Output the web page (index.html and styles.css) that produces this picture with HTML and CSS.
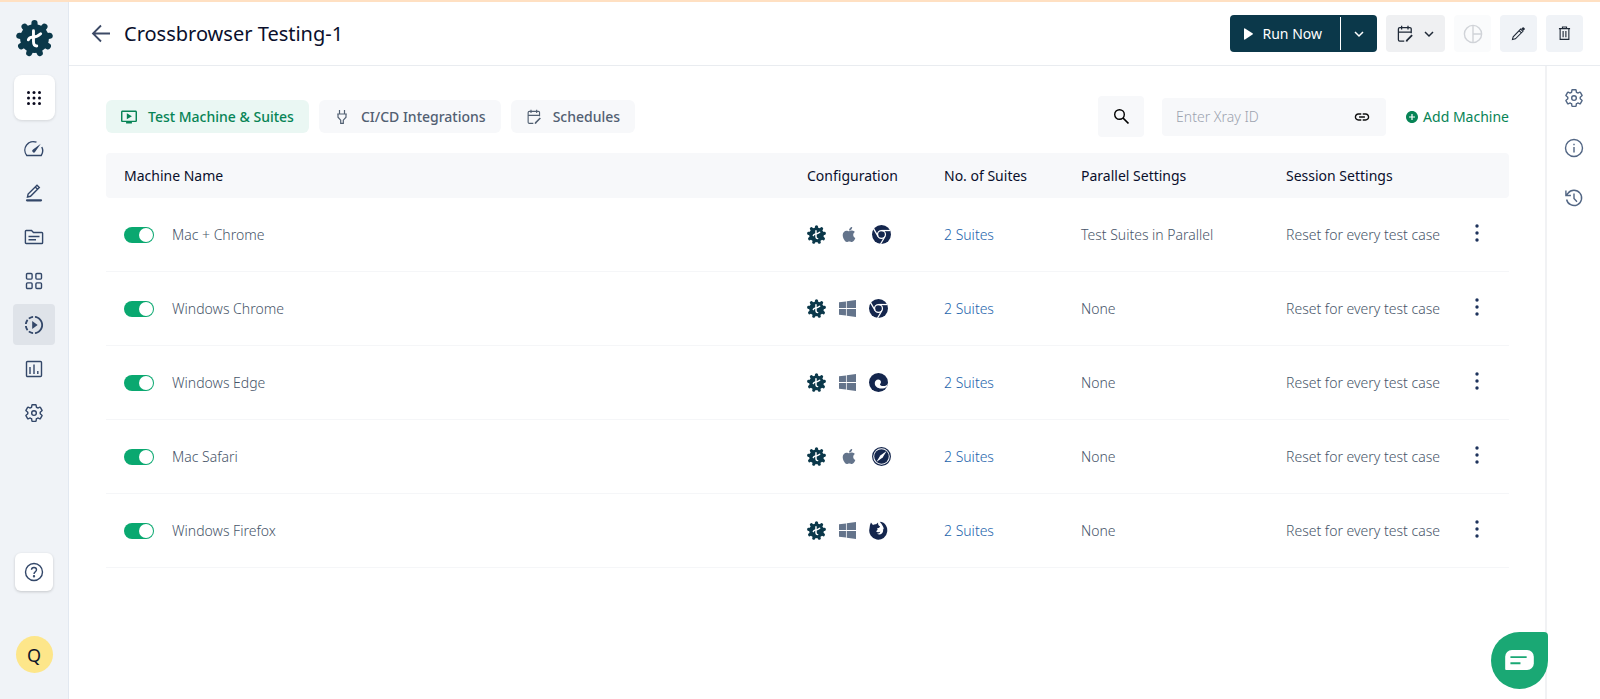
FILE: index.html
```html
<!DOCTYPE html>
<html lang="en">
<head>
<meta charset="utf-8">
<title>Crossbrowser Testing-1</title>
<link rel="stylesheet" href="styles.css">
</head>
<body>
<svg class="sprite" aria-hidden="true">
  <symbol id="brand" viewBox="0 0 36 36">
    <circle cx="18" cy="18.500" r="14"/>
    <g stroke="currentColor" stroke-width="6" stroke-linecap="round">
      <path d="M18 18.500V3.500"/>
      <path d="M18 18.500V3.500" transform="rotate(40 18 18.500)"/>
      <path d="M18 18.500V3.500" transform="rotate(80 18 18.500)"/>
      <path d="M18 18.500V3.500" transform="rotate(120 18 18.500)"/>
      <path d="M18 18.500V3.500" transform="rotate(160 18 18.500)"/>
      <path d="M18 18.500V3.500" transform="rotate(200 18 18.500)"/>
      <path d="M18 18.500V3.500" transform="rotate(240 18 18.500)"/>
      <path d="M18 18.500V3.500" transform="rotate(280 18 18.500)"/>
      <path d="M18 18.500V3.500" transform="rotate(320 18 18.500)"/>
    </g>
    <g fill="none" stroke="#fff" stroke-width="2.800" stroke-linecap="round">
      <path d="M17 11v10.500q0 4.300 3.200 4.300"/>
      <path d="M12 19.800q.6-2.400 4.500-2.800Q21 16.800 24 13.800"/>
    </g>
  </symbol>
  <symbol id="gear" viewBox="0 0 24 24">
    <path fill="none" stroke="currentColor" stroke-width="1.700" stroke-linejoin="round" d="M19.430 12.980c.04-.32.07-.64.07-.98s-.03-.66-.07-.98l2.110-1.650c.19-.15.24-.42.12-.64l-2-3.460c-.09-.16-.26-.25-.44-.25-.06 0-.12.01-.17.03l-2.490 1c-.52-.4-1.080-.73-1.690-.98l-.38-2.650C14.460 2.180 14.250 2 14 2h-4c-.25 0-.46.18-.49.42l-.38 2.650c-.61.25-1.170.59-1.690.98l-2.490-1c-.06-.02-.12-.03-.18-.03-.17 0-.34.09-.43.25l-2 3.460c-.13.22-.07.49.12.64l2.110 1.650c-.04.32-.07.65-.07.98s.03.66.07.98l-2.110 1.650c-.19.15-.24.42-.12.64l2 3.460c.09.16.26.25.44.25.06 0 .12-.01.17-.03l2.490-1c.52.4 1.080.73 1.690.98l.38 2.650c.03.24.24.42.49.42h4c.25 0 .46-.18.49-.42l.38-2.650c.61-.25 1.170-.59 1.690-.98l2.490 1c.06.02.12.03.18.03.17 0 .34-.09.43-.25l2-3.460c.12-.22.07-.49-.12-.64z"/>
    <circle cx="12" cy="12" r="2.800" fill="none" stroke="currentColor" stroke-width="1.700"/>
  </symbol>
  <symbol id="calendar" viewBox="0 0 24 24">
    <path fill="none" stroke="currentColor" stroke-width="1.700" d="M11 21.500H5a1.800 1.800 0 0 1-1.800-1.800V5.300A1.800 1.800 0 0 1 5 3.500h13.500a1.800 1.800 0 0 1 1.800 1.800V11M3.200 9.500h17M7.500 1v5M16 1v5"/>
    <path stroke="currentColor" stroke-width="2.400" d="m14 22 .5-1.500 7-7"/>
  </symbol>
  <symbol id="chevron" viewBox="0 0 12 12"><path fill="none" stroke="currentColor" stroke-width="1.500" d="m2 4 4 4 4-4"/></symbol>
  <symbol id="dots" viewBox="0 0 4 18"><circle cx="2" cy="2" r="1.700"/><circle cx="2" cy="9" r="1.700"/><circle cx="2" cy="16" r="1.700"/></symbol>
  <symbol id="windows" viewBox="0 32 448 448"><path d="M0 93.700l183.600-25.300v177.400H0V93.700zm0 324.600l183.600 25.300V268.400H0v149.900zm203.800 28L448 480V268.400H203.800v177.900zm0-380.600v180.100H448V32L203.800 65.700z"/></symbol>
  <symbol id="apple" viewBox="0 32 384 448"><path d="M318.700 268.700c-.2-36.700 16.400-64.400 50-84.800-18.800-26.900-47.200-41.700-84.700-44.600-35.500-2.800-74.300 20.700-88.500 20.700-15 0-49.400-19.700-76.400-19.700C63.300 141.200 4 184.800 4 273.500q0 39.300 14.400 81.200c12.800 36.700 59 126.700 107.200 125.200 25.200-.6 43-17.900 75.800-17.900 31.800 0 48.300 17.900 76.400 17.900 48.600-.7 90.400-82.500 102.600-119.300-65.200-30.700-61.700-90-61.700-91.900zm-56.600-164.200c27.300-32.400 24.800-61.900 24-72.500-24.100 1.400-52 16.400-67.900 34.900-17.500 19.800-27.800 44.300-25.600 71.900 26.100 2 49.900-11.400 69.500-34.300z"/></symbol>
  <symbol id="chrome" viewBox="0 0 24 24">
    <circle cx="12" cy="12" r="12"/>
    <g fill="none" stroke="#fff" stroke-width="1.600">
      <circle cx="12" cy="12" r="5"/>
      <path d="M12 7h11"/><path d="M12 7h11" transform="rotate(120 12 12)"/><path d="M12 7h11" transform="rotate(240 12 12)"/>
    </g>
  </symbol>
  <symbol id="edge" viewBox="0 0 24 24">
    <circle cx="12" cy="12" r="12"/>
    <path fill="#fff" d="M24.500 11.500c-.5 3.200-3 4.900-6.500 4.900-2.700 0-4.100-.8-4.100-1.900 0-.8 1.200-1.200 1.200-3 0-2-1.500-3.300-3.400-3.300-2.700 0-4.400 2.200-4.400 4.900 0 4 3.600 6.600 8 6.600 3.200 0 5.200-.8 7.400-2.700z"/>
    <circle cx="11.300" cy="12" r="2.200" fill="#fff"/>
  </symbol>
  <symbol id="safari" viewBox="0 0 24 24">
    <circle cx="12" cy="12" r="11.200" fill="none" stroke="currentColor" stroke-width="1.500"/>
    <circle cx="12" cy="12" r="9.200"/>
    <path fill="#fff" d="m18.500 5-5 8.300L5.500 19l5-8.300z"/>
  </symbol>
  <symbol id="firefox" viewBox="0 0 24 24">
    <path d="M2.500 2 5 5q2-1.300 4-.9L11.500 2q-.3 2 .8 3.700L14 6.800 12.800 8.500 10 9.500 11 11.200 9 13q1.500 1.600 3.800.8l1.700-.3q-1.300 2.700-4.500 2.500 3.500 2.200 6.500-.5 2-2.300 1-5.500l1 .8q.2-2-.8-3.800Q16.500 4 13.500 1q5.500.3 8.100 5Q23.500 9 23 13.500A11.400 11.400 0 1 1 .6 9.500Q.8 5 2.500 2z"/>
  </symbol>
</svg>

<div class="app">
  <nav class="sidebar" aria-label="Main">
    <svg class="logo"><use href="#brand"/></svg>
    <button class="apps" aria-label="Apps">
      <svg width="14" height="14" viewBox="0 0 14 14"><g><circle cx="1.500" cy="1.500" r="1.500"/><circle cx="7" cy="1.500" r="1.500"/><circle cx="12.500" cy="1.500" r="1.500"/><circle cx="1.500" cy="7" r="1.500"/><circle cx="7" cy="7" r="1.500"/><circle cx="12.500" cy="7" r="1.500"/><circle cx="1.500" cy="12.500" r="1.500"/><circle cx="7" cy="12.500" r="1.500"/><circle cx="12.500" cy="12.500" r="1.500"/></g></svg>
    </button>
    <div class="nav">
      <a class="nav-item" href="#" aria-label="Dashboard"><svg class="line" viewBox="0 0 20 20"><path d="M12.500 3.200A8.500 8.500 0 0 0 2.800 16.500h14.400a8.500 8.500 0 0 0 .6-8.500"/><path d="M16.800 4.800 9 10.600a1.600 1.600 0 1 0 2.200 2.200z" fill="currentColor" stroke="none"/></svg></a>
      <a class="nav-item" href="#" aria-label="Create"><svg class="line" viewBox="0 0 20 20"><path d="m3.500 14 .6-3L13 2.200l2.300 2.300-8.800 8.800zM11.300 4l2.200 2.200"/><path d="M3 17.300h14" stroke-width="2.200" stroke-linecap="round"/></svg></a>
      <a class="nav-item" href="#" aria-label="Test plans"><svg class="line" viewBox="0 0 20 20"><path d="M2.200 16.500a.8.8 0 0 1-.8-.8V4.300c0-.5.400-.8.800-.8h5.300l2 2h8.300c.5 0 .8.300.8.800v9.400c0 .5-.3.800-.8.800zM4.500 9.500h11M4.500 12.800h7.500"/></svg></a>
      <a class="nav-item" href="#" aria-label="Elements"><svg class="line" viewBox="0 0 20 20"><rect x="2.500" y="2.500" width="5.600" height="5.600" rx="1"/><rect x="11.900" y="2.500" width="5.600" height="5.600" rx="1"/><rect x="2.500" y="11.900" width="5.600" height="5.600" rx="1"/><rect x="11.900" y="11.900" width="5.600" height="5.600" rx="1"/></svg></a>
      <a class="nav-item active" href="#" aria-label="Test runs"><svg class="run-icon" viewBox="1 1 22 22"><path d="M10 7.500v9l6-4.500zM11 4.070V2.050c-2.010.2-3.840 1-5.320 2.210L7.100 5.690c1.110-.86 2.440-1.440 3.900-1.620zM5.690 7.100L4.260 5.680C3.050 7.160 2.250 8.990 2.050 11h2.020c.18-1.460.76-2.790 1.620-3.900zM4.070 13H2.050c.2 2.010 1 3.840 2.210 5.320l1.430-1.430c-.86-1.100-1.440-2.430-1.620-3.890zm1.610 6.740C7.160 20.950 9 21.750 11 21.950v-2.020c-1.460-.18-2.790-.76-3.900-1.620l-1.420 1.430zM22 12c0 5.160-3.920 9.420-8.950 9.950v-2.020C16.970 19.410 20 16.050 20 12s-3.030-7.410-6.950-7.930V2.050C18.080 2.580 22 6.840 22 12z"/></svg></a>
      <a class="nav-item" href="#" aria-label="Reports"><svg class="line" viewBox="0 0 20 20"><rect x="2.500" y="2.500" width="15" height="15" rx="1"/><path d="M6 8v7M10 5.500V15M13.800 12v3"/></svg></a>
      <a class="nav-item" href="#" aria-label="Settings"><svg class="line"><use href="#gear"/></svg></a>
    </div>
    <button class="help" aria-label="Help"><svg class="line" viewBox="0 0 20 20"><circle cx="10" cy="10" r="8.500"/><path d="M7.500 7.800c.1-3.200 5-3 5 0 0 1.900-2.500 2-2.500 4.200"/><circle cx="10" cy="14.300" r=".5"/></svg></button>
    <button class="avatar">Q</button>
  </nav>

  <div class="page">
    <header class="header">
      <button class="back" aria-label="Back"><svg width="20" height="20" viewBox="0 0 20 20"><path d="M19 9.500H2M10 1.500 2 9.500l8 8" fill="none" stroke="currentColor" stroke-width="1.800"/></svg></button>
      <h1 class="title">Crossbrowser Testing-1</h1>
      <div class="actions">
        <div class="run">
          <button class="run-now"><svg width="9" height="12" viewBox="0 0 9 12"><path d="M0 1q0-1 1-.6l7.500 4.900q.8.600 0 1.300L1 11.500q-1 .5-1-.5z"/></svg>Run Now</button>
          <button class="run-more" aria-label="More run options"><svg width="12" height="12"><use href="#chevron"/></svg></button>
        </div>
        <button class="tool schedule" aria-label="Schedule"><svg width="18" height="18"><use href="#calendar"/></svg><svg width="12" height="12"><use href="#chevron"/></svg></button>
        <button class="tool faded" aria-label="Report" disabled><svg class="line" viewBox="0 0 20 20"><circle cx="10" cy="10" r="8.600"/><path d="M10 1.400v17.200M10 10h8.600"/></svg></button>
        <button class="tool" aria-label="Edit"><svg width="15" height="15" viewBox="0 0 16 16"><path d="m1.500 14.500.8-3L10.300 3.300l2.400 2.400L4.700 13.700zM8.700 4.900l2.400 2.400" fill="none" stroke="currentColor" stroke-width="1.100"/><path d="m11 2.800 1.300-1.300q.7-.5 1.300 0l.9.900q.5.700 0 1.300L13.200 5z"/></svg></button>
        <button class="tool" aria-label="Delete"><svg width="13" height="15" viewBox="0 0 14 16"><path d="M1 2.800h12M4.800 2.500V1h4.400v1.500M2.300 3v11.300h9.400V3M5.500 5.300V12M8.500 5.300V12" fill="none" stroke="currentColor" stroke-width="1.200"/></svg></button>
      </div>
    </header>

    <div class="body">
      <main class="content">
        <div class="toolbar">
          <div class="tabs" role="tablist">
            <button class="tab selected" role="tab" aria-selected="true"><svg width="16" height="16" viewBox="1 1 22 22"><path d="M9 7v8l7-4zm12-4H3c-1.110 0-2 .89-2 2v12c0 1.100.89 2 2 2h5v2h8v-2h5c1.100 0 1.990-.9 1.990-2L23 5c0-1.110-.9-2-2-2zm0 14H3V5h18v12z"/></svg>Test Machine &amp; Suites</button>
            <button class="tab" role="tab"><svg width="16" height="16" viewBox="0 0 16 16"><path d="M5.500 1v4M10.500 1v4M3.200 5h9.600M4 5v3.200l2.700 3V15M12 5v3.200l-2.700 3V15M6.700 14.400h2.600" fill="none" stroke="currentColor" stroke-width="1.200"/></svg>CI/CD Integrations</button>
            <button class="tab" role="tab"><svg width="16" height="16"><use href="#calendar"/></svg>Schedules</button>
          </div>
          <button class="search" aria-label="Search"><svg width="17" height="17" viewBox="0 0 17 17"><circle cx="6.500" cy="6.500" r="4.800" fill="none" stroke="currentColor" stroke-width="1.400"/><path d="m10 10 5.500 5.500" stroke="currentColor" stroke-width="1.700"/></svg></button>
          <div class="xray">
            <input type="text" placeholder="Enter Xray ID" aria-label="Xray ID">
            <svg width="16" height="16" viewBox="1 1 22 22"><path d="M3.900 12c0-1.710 1.390-3.100 3.100-3.100h4V7H7c-2.760 0-5 2.240-5 5s2.240 5 5 5h4v-1.900H7c-1.710 0-3.100-1.390-3.100-3.100zM8 13h8v-2H8v2zm9-6h-4v1.900h4c1.710 0 3.100 1.390 3.100 3.100s-1.390 3.100-3.100 3.100h-4V17h4c2.760 0 5-2.240 5-5s-2.240-5-5-5z"/></svg>
          </div>
          <button class="add"><svg width="12" height="12" viewBox="2 2 20 20"><path d="M12 2C6.480 2 2 6.480 2 12s4.480 10 10 10 10-4.480 10-10S17.520 2 12 2zm5 11h-4v4h-2v-4H7v-2h4V7h2v4h4v2z"/></svg>Add Machine</button>
        </div>

        <table class="machines">
          <colgroup><col><col class="c-config"><col class="c-suites"><col class="c-parallel"><col class="c-session"><col class="c-menu"></colgroup>
          <thead>
            <tr><th>Machine Name</th><th>Configuration</th><th>No. of Suites</th><th>Parallel Settings</th><th>Session Settings</th><th></th></tr>
          </thead>
          <tbody>
            <tr>
              <td><label class="machine"><input class="switch" type="checkbox" checked>Mac + Chrome</label></td>
              <td><div class="config"><svg class="brand"><use href="#brand"/></svg><svg class="apple"><use href="#apple"/></svg><svg class="browser"><use href="#chrome"/></svg></div></td>
              <td><a href="#">2 Suites</a></td><td>Test Suites in Parallel</td><td>Reset for every test case</td>
              <td class="menu"><button aria-label="Row menu"><svg><use href="#dots"/></svg></button></td>
            </tr>
            <tr>
              <td><label class="machine"><input class="switch" type="checkbox" checked>Windows Chrome</label></td>
              <td><div class="config"><svg class="brand"><use href="#brand"/></svg><svg class="windows"><use href="#windows"/></svg><svg class="browser"><use href="#chrome"/></svg></div></td>
              <td><a href="#">2 Suites</a></td><td>None</td><td>Reset for every test case</td>
              <td class="menu"><button aria-label="Row menu"><svg><use href="#dots"/></svg></button></td>
            </tr>
            <tr>
              <td><label class="machine"><input class="switch" type="checkbox" checked>Windows Edge</label></td>
              <td><div class="config"><svg class="brand"><use href="#brand"/></svg><svg class="windows"><use href="#windows"/></svg><svg class="browser"><use href="#edge"/></svg></div></td>
              <td><a href="#">2 Suites</a></td><td>None</td><td>Reset for every test case</td>
              <td class="menu"><button aria-label="Row menu"><svg><use href="#dots"/></svg></button></td>
            </tr>
            <tr>
              <td><label class="machine"><input class="switch" type="checkbox" checked>Mac Safari</label></td>
              <td><div class="config"><svg class="brand"><use href="#brand"/></svg><svg class="apple"><use href="#apple"/></svg><svg class="browser"><use href="#safari"/></svg></div></td>
              <td><a href="#">2 Suites</a></td><td>None</td><td>Reset for every test case</td>
              <td class="menu"><button aria-label="Row menu"><svg><use href="#dots"/></svg></button></td>
            </tr>
            <tr>
              <td><label class="machine"><input class="switch" type="checkbox" checked>Windows Firefox</label></td>
              <td><div class="config"><svg class="brand"><use href="#brand"/></svg><svg class="windows"><use href="#windows"/></svg><svg class="browser"><use href="#firefox"/></svg></div></td>
              <td><a href="#">2 Suites</a></td><td>None</td><td>Reset for every test case</td>
              <td class="menu"><button aria-label="Row menu"><svg><use href="#dots"/></svg></button></td>
            </tr>
          </tbody>
        </table>
      </main>

      <aside class="rail">
        <button aria-label="Settings"><svg class="line"><use href="#gear"/></svg></button>
        <button aria-label="Info"><svg class="line" viewBox="0 0 20 20"><circle cx="10" cy="10" r="8.500"/><path d="M10 9v5.500M10 5.700v1.500"/></svg></button>
        <button aria-label="History"><svg class="line" viewBox="0 0 20 20"><path d="M2.600 11.500A7.600 7.600 0 1 0 4 5.300L2 7.500M1.900 2.500v5h5M10 5.500v5l3 3.200"/></svg></button>
      </aside>
    </div>
  </div>
</div>

<button class="chat" aria-label="Chat">
  <svg width="29" height="21" viewBox="0 0 30 22"><path fill="#fff" d="M7 0h16a7 7 0 0 1 7 7v7a7 7 0 0 1-7 7H1a1 1 0 0 1-1-1V7a7 7 0 0 1 7-7z"/><path d="M5.500 7.500h17M5.500 13.800h10.500" stroke="#1aa874" stroke-width="2"/></svg>
</button>
</body>
</html>
```
FILE: styles.css
```css
* { box-sizing: border-box; }

body {
  margin: 0;
  border-top: 2px solid #ffe0c2;
  background: #fff;
  color: #475569;
  font: 350 14px/20px "Noto Sans", "Open Sans", sans-serif;
}

button {
  display: flex;
  align-items: center;
  justify-content: center;
  padding: 0;
  border: 0;
  background: none;
  color: inherit;
  font: inherit;
}

svg { display: block; flex: none; fill: currentColor; }
.sprite { position: absolute; width: 0; height: 0; }
.line { width: 20px; height: 20px; fill: none; stroke: currentColor; stroke-width: 1.4; }

.app { display: flex; min-height: calc(100vh - 2px); }

.sidebar {
  display: flex;
  flex: none;
  flex-direction: column;
  align-items: center;
  width: 69px;
  padding: 17px 0 26px;
  border-right: 1px solid #e2e8f0;
  background: #f0f3f7;
  color: #334769;
}
.logo { width: 37px; height: 38px; color: #0b384a; }
.apps {
  width: 41px;
  height: 45px;
  margin-top: 18px;
  border-radius: 8px;
  background: #fff;
  box-shadow: 0 1px 3px #0000001f;
  color: #0a0a1e;
}
.nav { display: flex; flex-direction: column; gap: 3px; margin-top: 8px; }
.nav-item {
  display: flex;
  align-items: center;
  justify-content: center;
  width: 42px;
  height: 41px;
  border-radius: 4px;
  color: inherit;
}
.nav-item.active { background: #dfe3e9; }
.run-icon { width: 20px; height: 20px; }
.help {
  width: 38px;
  height: 38px;
  margin-top: auto;
  border-radius: 6px;
  background: #fff;
  box-shadow: 0 1px 3px #0000002e;
}
.avatar {
  width: 37px;
  height: 37px;
  margin-top: 45px;
  border-radius: 50%;
  background: #fde68a;
  color: #0f172a;
  font-size: 18px;
  font-weight: 400;
}

.page { display: flex; flex: 1; flex-direction: column; min-width: 0; }
.header {
  display: flex;
  align-items: center;
  height: 64px;
  padding: 0 17px 0 22px;
  border-bottom: 1px solid #e9ecf0;
}
.back { width: 20px; color: #3c4a66; }
.title {
  flex: 1;
  margin: 0 0 0 13px;
  color: #0a0f2c;
  font-size: 20px;
  font-weight: 400;
  line-height: 28px;
}
.actions { display: flex; gap: 9px; }
.run {
  display: flex;
  height: 37px;
  border-radius: 4px;
  background: #0b384a;
  color: #fff;
}
.run-now { gap: 10px; padding: 0 18px 0 14px; font-weight: 400; }
.run-more {
  width: 37px;
  margin: 2px 0;
  border-left: 1px solid #fff;
}
.tool { width: 37px; height: 37px; border-radius: 4px; background: #f0f3f7; color: #1f2937; }
.schedule { gap: 9px; width: 59px; background: #eff0f2; }
.faded { background: #fafbfc; color: #d0d3d8; }

.body { display: flex; flex: 1; }
.content { flex: 1; min-width: 0; padding: 30px 36px 0 37px; }
.toolbar { display: flex; align-items: center; margin-bottom: 16px; }
.tabs { display: flex; flex: 1; gap: 10px; }
.tab {
  gap: 11px;
  height: 33px;
  padding: 0 15px;
  border-radius: 6px;
  background: #f7f8fa;
  color: #526072;
  font-weight: 500;
}
.tab.selected { background: #eaf7f3; color: #078456; }
.search {
  width: 46px;
  height: 41px;
  border-radius: 4px;
  background: #f7f8fa;
  color: #000;
}
.xray {
  display: flex;
  align-items: center;
  width: 224px;
  height: 38px;
  margin: 0 20px 0 18px;
  padding: 0 16px 0 14px;
  border-radius: 4px;
  background: #f7f8fa;
  color: #111;
}
.xray input {
  flex: 1;
  min-width: 0;
  padding: 0;
  border: 0;
  outline: 0;
  background: none;
  color: #475569;
  font: inherit;
}
.xray input::placeholder { color: #9ca3af; opacity: 1; }
.add { gap: 5px; color: #078456; font-weight: 400; }

.machines { width: 100%; border-collapse: separate; border-spacing: 0; table-layout: fixed; }
.c-config, .c-suites { width: 137px; }
.c-parallel { width: 205px; }
.c-session { width: 177px; }
.c-menu { width: 64px; }
.machines th {
  height: 45px;
  padding: 0 0 0 18px;
  background: #f7f8fa;
  color: #0a0f2c;
  font-weight: 450;
  text-align: left;
  white-space: nowrap;
}
.machines th:first-child { border-radius: 4px 0 0 4px; }
.machines th:last-child { border-radius: 0 4px 4px 0; }
.machines td {
  height: 74px;
  padding: 0 0 0 18px;
  border-bottom: 1px solid #f5f6f8;
  white-space: nowrap;
}
.machines a { color: #1d64ac; text-decoration: none; }
.machines .menu { padding: 0 0 4px; }
.machine { display: flex; align-items: center; gap: 18px; }
.switch {
  display: flex;
  justify-content: flex-end;
  width: 30px;
  height: 16px;
  margin: 0;
  padding: 1px;
  border-radius: 8px;
  background: #0aa870;
  appearance: none;
}
.switch::before { content: ""; width: 14px; height: 14px; border-radius: 50%; background: #fff; }
.config { display: flex; align-items: center; gap: 13px; color: #14264d; }
.brand { width: 19px; height: 19px; color: #0b384a; }
.windows { width: 17px; height: 17px; color: #64748b; }
.apple { width: 20px; height: 15px; color: #64748b; }
.browser { width: 19px; height: 19px; }
.menu button { margin: 0 auto; padding: 4px; color: #1e335c; }
.menu svg { width: 4px; height: 18px; }

.rail {
  display: flex;
  flex: none;
  flex-direction: column;
  align-items: center;
  gap: 30px;
  width: 55px;
  padding-top: 22px;
  border-left: 2px solid #f1f2f4;
  color: #526684;
}

.chat {
  position: fixed;
  right: 52px;
  bottom: 10px;
  width: 57px;
  height: 57px;
  border-radius: 50% 4px 50% 50%;
  background: #1aa874;
}
```
